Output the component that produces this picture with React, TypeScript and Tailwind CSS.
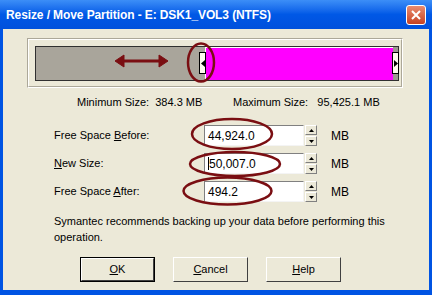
import React from "react";

const SpinBox = ({ value, caret }: { value: string; caret?: boolean }) => (
  <div className="flex h-[21px]">
    <div className="w-[100px] h-full bg-white border-t border-l border-[#808080] border-b border-r border-b-[#f4f4f4] border-r-[#f4f4f4] flex items-center pl-[3px] text-[12px] text-black">
      {caret && <span className="w-px h-[13px] bg-black" />}
      {value}
    </div>
    <div className="w-[12px] h-full flex flex-col gap-px ml-[1px]">
      <div className="flex-1 bg-[#ECE9D8] border border-[#fff] border-r-[#808080] border-b-[#808080] flex items-center justify-center">
        <svg width="5" height="3" viewBox="0 0 5 3">
          <path d="M2.5 0 L5 3 L0 3 Z" fill="#000" />
        </svg>
      </div>
      <div className="flex-1 bg-[#ECE9D8] border border-[#fff] border-r-[#808080] border-b-[#808080] flex items-center justify-center">
        <svg width="5" height="3" viewBox="0 0 5 3">
          <path d="M0 0 L5 0 L2.5 3 Z" fill="#000" />
        </svg>
      </div>
    </div>
    <span className="ml-[14px] self-center text-[12px]">MB</span>
  </div>
);

const Field = ({
  pre,
  key1,
  post,
  value,
  caret,
}: {
  pre: string;
  key1: string;
  post: string;
  value: string;
  caret?: boolean;
}) => (
  <div className="flex items-center">
    <div className="w-[150px]">
      {pre}
      <span className="underline">{key1}</span>
      {post}
    </div>
    <SpinBox value={value} caret={caret} />
  </div>
);

const XpButton = ({
  pre,
  key1,
  post,
  isDefault,
}: {
  pre: string;
  key1: string;
  post: string;
  isDefault?: boolean;
}) => (
  <div
    className={
      isDefault
        ? "w-[75px] h-[25px] border border-black"
        : "w-[75px] h-[25px]"
    }
  >
    <div className="w-full h-full bg-[#ECE9D8] border border-t-white border-l-white border-r-[#404040] border-b-[#404040] flex items-center justify-center">
      {pre}
      <span className="underline">{key1}</span>
      {post}
    </div>
  </div>
);

export default function App() {
  return (
    <div className="w-[432px] h-[295px] bg-[#0054E3] flex flex-col font-['Liberation_Sans',Arial,sans-serif] text-[11px] text-black overflow-hidden">
      {/* title bar */}
      <div className="h-[29px] flex items-center justify-between pl-[6px] pr-[6px] bg-gradient-to-b from-[#3C8EF7] via-[#0058E6] to-[#0050DC]">
        <span className="text-white font-bold text-[12px] tracking-[-0.1px] font-['Liberation_Sans',Arial,sans-serif]">
          Resize / Move Partition - E: DSK1_VOL3 (NTFS)
        </span>
        <div className="w-[20px] h-[20px] rounded-[3px] border border-white bg-gradient-to-b from-[#E88B6F] to-[#C7401F] flex items-center justify-center">
          <svg width="10" height="10" viewBox="0 0 10 10">
            <path d="M1 1 L9 9 M9 1 L1 9" stroke="#fff" strokeWidth="2" />
          </svg>
        </div>
      </div>

      {/* dialog body */}
      <div className="relative mx-[3px] flex-1 bg-[#ECE9D8] pt-[9px]">
        <div className="ml-[24px] w-[376px] h-[50px] border border-t-[#ACA899] border-l-[#ACA899] border-r-white border-b-white">
          <div className="w-full h-full border border-t-white border-l-white border-r-[#ACA899] border-b-[#ACA899] pl-[6px] pt-[6px]">
            <div className="relative w-[364px] h-[35px] border border-[#303030] bg-[#A9A59B] flex">
              <div className="w-[169px] h-full" />
              <div className="w-[188px] h-full bg-[#FF00FF] border-t border-l border-white" />
              <div className="w-[5px] h-full bg-[#9C9890]" />
              {/* left handle */}
              <div className="absolute left-[163px] top-[5px] w-[7px] h-[22px] bg-[#FFFBEF] border border-black flex items-center justify-center">
                <svg width="4" height="7" viewBox="0 0 4 7">
                  <path d="M4 0 L0 3.5 L4 7 Z" fill="#000" />
                </svg>
              </div>
              {/* right handle */}
              <div className="absolute left-[356px] top-[5px] w-[7px] h-[22px] bg-[#FFFBEF] border border-black flex items-center justify-center">
                <svg width="4" height="7" viewBox="0 0 4 7">
                  <path d="M0 0 L4 3.5 L0 7 Z" fill="#000" />
                </svg>
              </div>
            </div>
          </div>
        </div>

        <div className="mt-[8px] h-[13px] flex items-center">
          <span className="ml-[74px] w-[156px] whitespace-pre">Minimum Size:  384.3 MB</span>
          <span className="whitespace-pre">Maximum Size:   95,425.1 MB</span>
        </div>

        <div className="mt-[16px] ml-[51px] flex flex-col gap-[7px]">
          <Field pre="Free Space " key1="B" post="efore:" value="44,924.0" />
          <Field pre="" key1="N" post="ew Size:" value="50,007.0" caret />
          <Field pre="Free Space " key1="A" post="fter:" value="494.2" />
        </div>

        <div className="mt-[11px] ml-[51px] leading-[16px] w-[340px]">
          Symantec recommends backing up your data before performing this operation.
        </div>

        <div className="mt-[12px] ml-[77px] flex gap-[18px]">
          <XpButton pre="" key1="O" post="K" isDefault />
          <XpButton pre="" key1="C" post="ancel" />
          <XpButton pre="" key1="H" post="elp" />
        </div>

        {/* annotation overlay */}
        <svg
          className="absolute inset-0 pointer-events-none"
          width="426"
          height="262"
          viewBox="0 0 426 262"
        >
          <g fill="none" stroke="#7A0E12" strokeWidth="2.5">
            <ellipse cx="198" cy="33.5" rx="13" ry="19" />
            <ellipse cx="229" cy="105" rx="40" ry="15" />
            <ellipse cx="232" cy="135" rx="45" ry="12" />
            <ellipse cx="224.5" cy="162" rx="44" ry="13.5" />
          </g>
          <g fill="#7A0E12" stroke="#7A0E12">
            <path d="M119 32 L158 32" strokeWidth="3" fill="none" />
            <path d="M112 32 L121 26 L121 38 Z" />
            <path d="M165 32 L156 26 L156 38 Z" />
          </g>
        </svg>
      </div>
      <div className="h-[5px]" />
    </div>
  );
}
